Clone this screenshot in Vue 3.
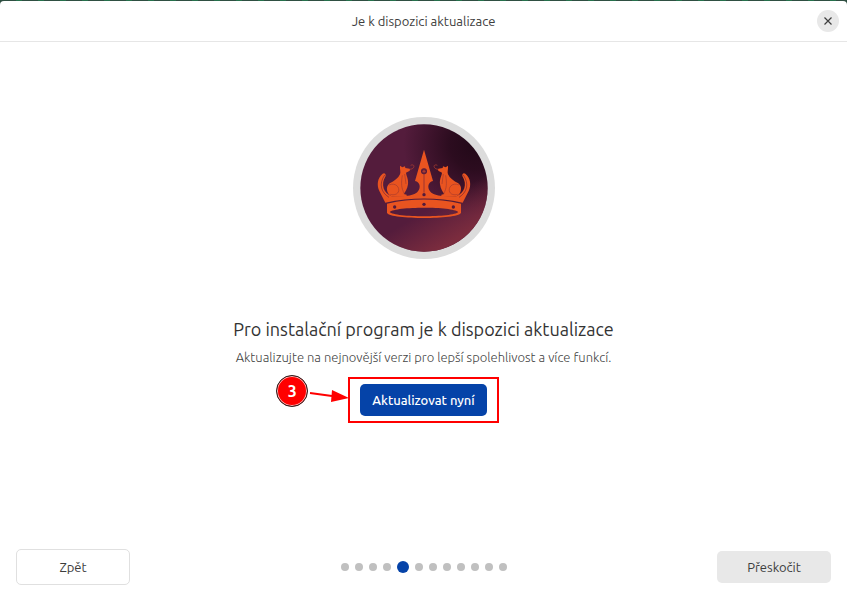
<script setup>
import { ref } from 'vue'

const steps = 12
const current = ref(4)

const back = () => {
  if (current.value > 0) current.value--
}

const skip = () => {
  if (current.value < steps - 1) current.value++
}
</script>

<template>
  <div class="desktop">
    <div class="window">
      <header class="titlebar">
        <span class="title">Je k dispozici aktualizace</span>
        <button class="close-btn" type="button" aria-label="Zavřít">
          <svg width="10" height="10" viewBox="0 0 10 10">
            <path d="M1.5 1.5 L8.5 8.5 M8.5 1.5 L1.5 8.5" stroke="currentColor" stroke-width="1.2" />
          </svg>
        </button>
      </header>

      <main class="content">
        <svg class="emblem" viewBox="36 36 426 426" aria-hidden="true">
          <defs>
            <radialGradient id="night" cx="0.9" cy="0.16" r="0.56">
              <stop offset="0" stop-color="#220918" />
              <stop offset="0.35" stop-color="#2c0c1f" />
              <stop offset="1" stop-color="#541c3c" />
            </radialGradient>
            <linearGradient id="glow" x1="0.3" y1="0.1" x2="0.8" y2="0.94">
              <stop offset="0.62" stop-color="#7b2c3e" stop-opacity="0" />
              <stop offset="0.94" stop-color="#7b2c3e" />
            </linearGradient>
          </defs>
          <circle cx="249" cy="249" r="213" fill="#dcdcdc" />
          <circle cx="249" cy="249" r="191" fill="url(#night)" />
          <circle cx="249" cy="249" r="191" fill="url(#glow)" />

          <g fill="#e95420">
            <!-- koruna -->
            <path d="M249 134 L276 228 C261 231 258 247 267 259 C275 269 287 271 304 273 L346 274 C370 264 380 239 364 213 C363 206 368 202 373 206 C389 219 391 240 383 258 L365 293 Q249 268 133 293 L115 258 C107 240 109 219 125 206 C130 202 135 206 134 213 C118 239 128 264 152 274 L194 273 C211 271 223 269 231 259 C240 247 237 231 222 228 Z" />
            <path fill-rule="evenodd" d="M138 296 Q249 271 360 296 L360 324 C348 344 150 344 138 324 Z M146 321 C160 338 338 338 352 321 C335 304 163 304 146 321 Z" />
            <g id="cat">
              <path d="M177 182 L184 187 L192 184 L193 189 L206 191 Q209 195 205 198 L195 203 C196 213 203 222 201 238 C199 252 193 261 188 267 L197 269 L197 274 L151 274 C136 265 133 245 146 235 C160 228 172 219 177 208 C180 200 176 194 177 182 Z" />
              <path d="M206 193 C223 192 222 175 209 181" fill="none" stroke="#b84230" stroke-width="2" />
              <path d="M144 240 C164 231 178 248 172 261 C167 270 157 270 148 268 M184 211 C180 235 181 250 190 266 M191 207 L195 237" fill="none" stroke="#a53a2d" stroke-width="2" />
            </g>
            <use href="#cat" transform="matrix(-1 0 0 1 498 0)" />
          </g>

          <g fill="none" stroke="#792637" stroke-width="2">
            <path d="M249 207 V263" />
            <path d="M131 210 C112 238 121 263 144 277 M367 210 C386 238 377 263 354 277" />
          </g>
          <g fill="#531b3b">
            <circle cx="249" cy="199" r="9" />
            <circle cx="249" cy="269" r="5" />
            <circle cx="249" cy="298" r="5" />
            <circle cx="161" cy="306" r="5" />
            <circle cx="337" cy="306" r="5" />
          </g>
          <path d="M249 193 V205 M243 199 H255 M245 195 L253 203 M253 195 L245 203" stroke="#b94130" stroke-width="2" />
        </svg>

        <h1>Pro instalační program je k dispozici aktualizace</h1>
        <p>Aktualizujte na nejnovější verzi pro lepší spolehlivost a více funkcí.</p>

        <div class="highlight">
          <div class="marker">
            <span class="badge">3</span>
            <svg width="42" height="16" viewBox="0 0 42 16">
              <path d="M2 2 L24 5" stroke="#f00" stroke-width="2" />
              <path d="M24 -1 L41 7 L23 11 Z" fill="#f00" />
            </svg>
          </div>
          <button class="btn primary" type="button">Aktualizovat nyní</button>
        </div>
      </main>

      <footer class="footer">
        <button class="btn outlined" type="button" @click="back">Zpět</button>
        <div class="dots">
          <span v-for="n in steps" :key="n" class="dot" :class="{ active: n - 1 === current }"></span>
        </div>
        <button class="btn flat" type="button" @click="skip">Přeskočit</button>
      </footer>
    </div>
  </div>
</template>

<style>
body {
  margin: 0;
}
</style>

<style scoped>
.desktop {
  box-sizing: border-box;
  min-height: 100vh;
  padding-top: 1px;
  display: flex;
  background: repeating-linear-gradient(90deg, #2f4f42 0 16px, #26704b 16px 22px);
  font-family: Ubuntu, "Noto Sans", sans-serif;
  font-size: 13px;
  color: #3d3d3d;
}

.window {
  flex: 1;
  display: flex;
  flex-direction: column;
  background: #fff;
  border-radius: 4px 4px 0 0;
}

.titlebar {
  display: grid;
  grid-template-columns: 1fr auto 1fr;
  align-items: center;
  height: 40px;
  padding: 0 8px;
  border-bottom: 1px solid #e6e6e6;
}

.title {
  grid-column: 2;
}

.close-btn {
  justify-self: end;
  display: flex;
  align-items: center;
  justify-content: center;
  width: 22px;
  height: 22px;
  padding: 0;
  border: none;
  border-radius: 50%;
  background: #e8e8e8;
  color: #3d3d3d;
  cursor: pointer;
}

.content {
  flex: 1;
  display: flex;
  flex-direction: column;
  align-items: center;
  padding: 75px 16px 16px;
}

.emblem {
  width: 142px;
  height: 142px;
  margin-bottom: 56px;
}

h1 {
  margin: 0 0 4px;
  font-size: 18px;
  font-weight: 400;
  line-height: 28px;
  color: #333;
}

p {
  margin: 0 0 10px;
  font-size: 13px;
  font-weight: 300;
  line-height: 20px;
  color: #444;
}

.highlight {
  position: relative;
  display: flex;
  padding: 5px 10px;
  border: 2px solid #f00;
}

/* značka kroku leží vlevo od rámečku */
.marker {
  position: absolute;
  right: 100%;
  top: -4px;
  display: flex;
  align-items: flex-end;
}

.marker svg {
  overflow: visible;
}

.badge {
  box-sizing: border-box;
  width: 32px;
  height: 32px;
  border: 1px solid #222;
  border-radius: 50%;
  background: #f00;
  box-shadow: inset 0 0 0 1px #fbb;
  color: #fff;
  font-weight: 700;
  font-size: 16px;
  line-height: 30px;
  text-align: center;
}

.btn {
  box-sizing: border-box;
  height: 32px;
  padding: 0 12px;
  border: none;
  border-radius: 5px;
  font: inherit;
  color: inherit;
  cursor: pointer;
}

.primary {
  min-width: 126px;
  background: #0543a8;
  color: #fff;
  font-weight: 500;
}

.footer {
  display: flex;
  align-items: center;
  justify-content: space-between;
  padding: 0 16px 15px;
}

.outlined,
.flat {
  width: 114px;
}

.outlined {
  height: 36px;
  border: 1px solid #e0e0e0;
  background: #fff;
}

.flat {
  background: #e8e8e8;
}

.dots {
  display: flex;
  align-items: center;
  gap: 6px;
}

.dot {
  width: 8px;
  height: 8px;
  border-radius: 50%;
  background: #c0c0c0;
}

.dot.active {
  width: 12px;
  height: 12px;
  background: #0543a8;
}
</style>
